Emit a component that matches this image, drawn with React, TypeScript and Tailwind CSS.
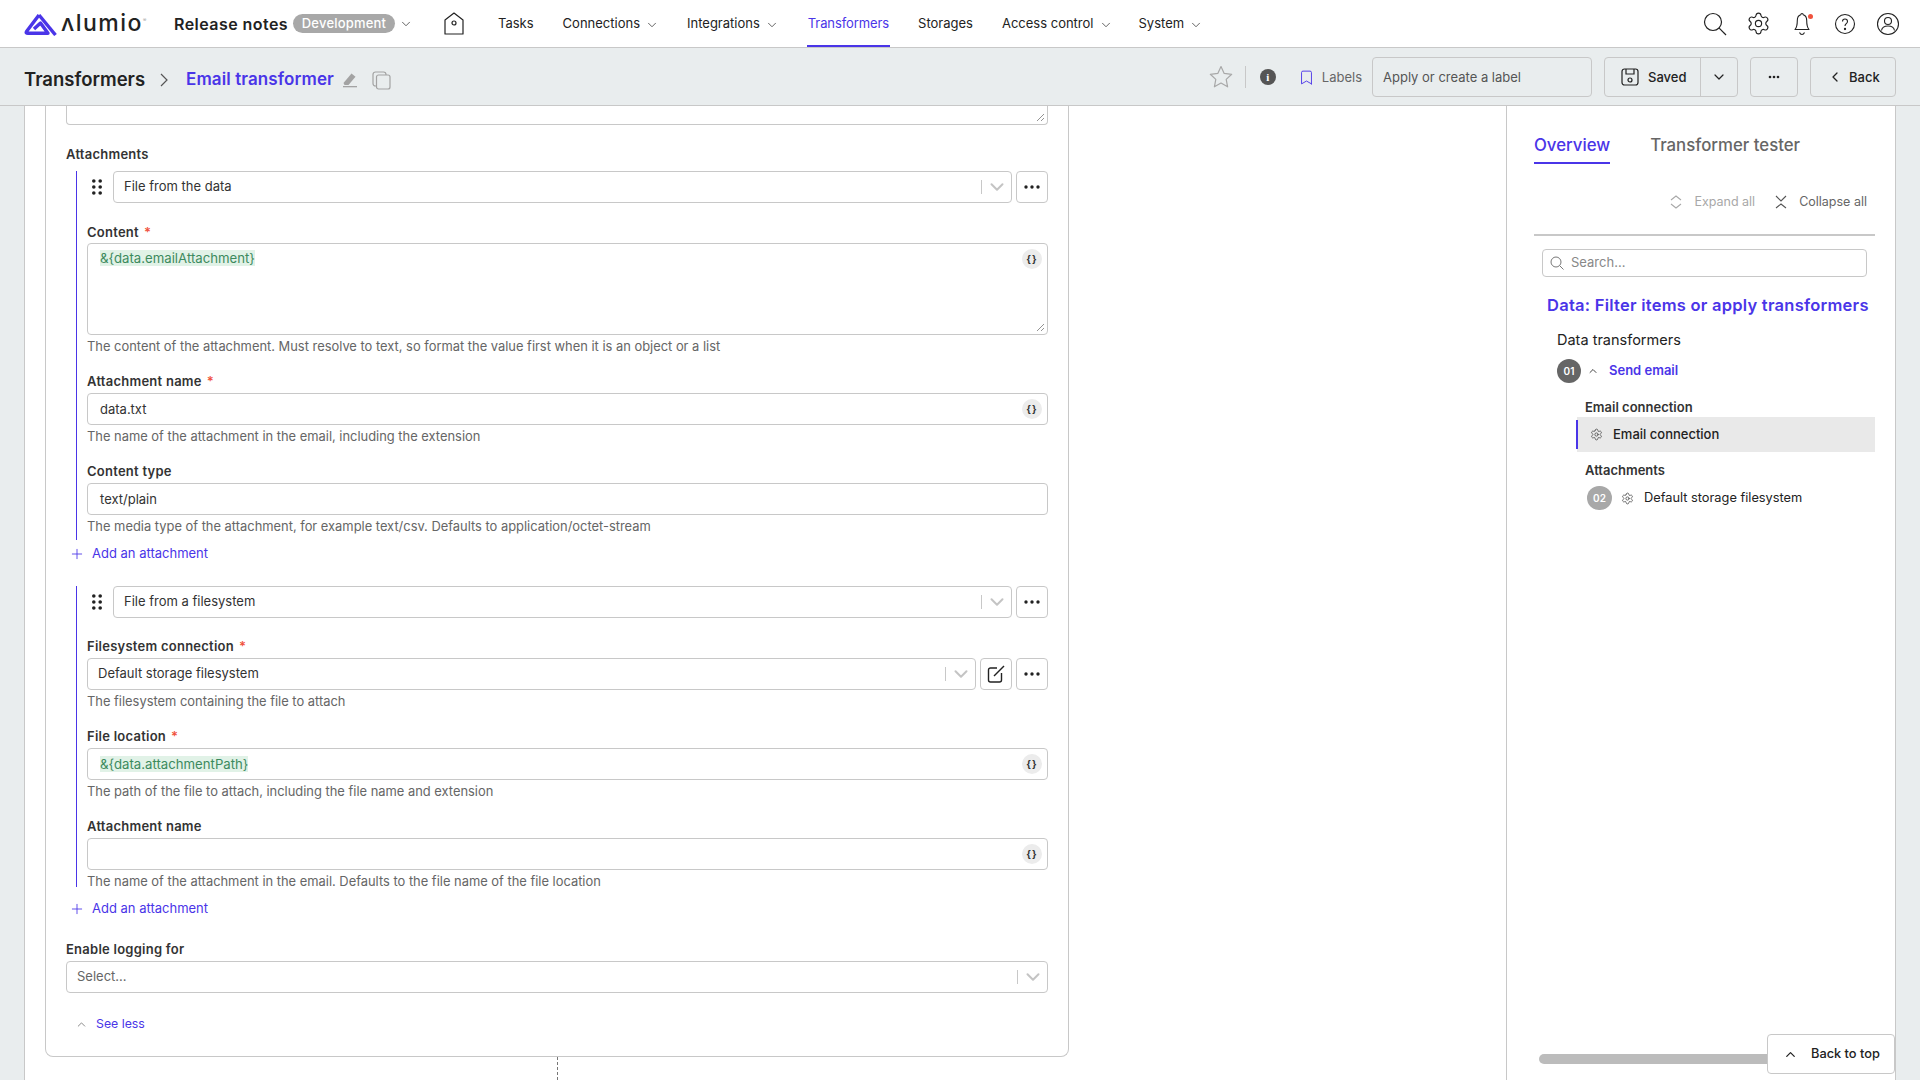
import { Bookmark, ChevronDown, ChevronLeft, ChevronUp, Plus, Settings } from "lucide-react";

const font = "font-['Inter','Liberation_Sans',sans-serif]";

function Dots() {
  return (
    <svg width="16" height="4" viewBox="0 0 16 4" className="text-[#222]">
      <circle cx="2" cy="2" r="1.7" fill="currentColor" />
      <circle cx="8" cy="2" r="1.7" fill="currentColor" />
      <circle cx="14" cy="2" r="1.7" fill="currentColor" />
    </svg>
  );
}

function MoreButton() {
  return (
    <button className="w-8 h-8 shrink-0 flex items-center justify-center bg-white border border-[#c8c8c8] rounded">
      <Dots />
    </button>
  );
}

function Braces() {
  return (
    <span className="absolute right-[5px] top-[5px] w-5 h-5 rounded-full bg-[#ececec] flex items-center justify-center text-[10px] font-bold text-[#333] tracking-[1px]">
      {"{}"}
    </span>
  );
}

function Resizer() {
  return (
    <svg width="9" height="9" viewBox="0 0 9 9" className="absolute right-[2px] bottom-[2px] text-[#777]">
      <path d="M1 8 8 1M5 8 8 5" stroke="currentColor" strokeWidth="0.8" />
    </svg>
  );
}

function Select({ value, muted = false }: { value: string; muted?: boolean }) {
  return (
    <div className="flex-1 h-8 bg-white border border-[#c8c8c8] rounded flex items-center pl-[10px] pr-[3px]">
      <span className={`flex-1 text-[13px] ${muted ? "text-[#666]" : "text-[#333]"}`}>{value}</span>
      <span className="w-px h-[14px] bg-[#c8c8c8] mr-[4px]" />
      <ChevronDown size={22} strokeWidth={2.2} className="text-[#c4c4c4]" />
    </div>
  );
}

function Token({ children }: { children: string }) {
  return <span className="bg-[#e1f2e7] text-[#3c8a5e] text-[13.2px] leading-[16px] inline-block">{children}</span>;
}

function Input({ value, token, braces = true }: { value?: string; token?: string; braces?: boolean }) {
  return (
    <div className="relative h-8 bg-white border border-[#c8c8c8] rounded flex items-center pl-3 text-[13px] leading-[22px] text-[#333]">
      {token ? <Token>{token}</Token> : <span>{value}</span>}
      {braces && <Braces />}
    </div>
  );
}

function Label({ children, required, className = "" }: { children: string; required?: boolean; className?: string }) {
  return (
    <div className={`h-5 leading-5 text-[13px] tracking-[0.25px] font-semibold text-[#333] ${className}`}>
      {children}
      {required && <span className="text-[#f0523d] ml-[5px]">*</span>}
    </div>
  );
}

function Help({ children, className = "" }: { children: string; className?: string }) {
  return <div className={`h-5 leading-[22px] text-[12.9px] text-[#666] ${className}`}>{children}</div>;
}

function AddAttachment({ className = "" }: { className?: string }) {
  return (
    <div className={`h-5 flex items-center text-[13px] text-[#4a35e8] pl-[3px] gap-[7px] ${className}`}>
      <Plus size={16} strokeWidth={1.3} />
      Add an attachment
    </div>
  );
}

function DragHandle() {
  return (
    <svg width="10" height="16" viewBox="0 0 10 16" className="text-[#222] ml-[15px] mr-[7px]">
      {[2, 8, 14].map((y) => (
        <g key={y}>
          <circle cx="1.8" cy={y} r="1.8" fill="currentColor" />
          <circle cx="8.2" cy={y} r="1.8" fill="currentColor" />
        </g>
      ))}
    </svg>
  );
}

function Logo() {
  return (
    <div className="flex items-center w-[120px] shrink-0">
      <svg width="34" height="24" viewBox="0 0 34 24" fill="none" stroke="#4a35e8" strokeWidth="3.4" strokeLinejoin="round" className="shrink-0">
        <path d="M15 3 2.500 19.500q-1 1.800 1.500 1.800H24L16.500 11 10 17" />
        <path d="m15 3 16.500 20" />
      </svg>
      <span className="ml-[3px] text-[23px] leading-none font-medium text-[#222] tracking-[1.5px]">ʌlumio</span>
      <span className="text-[5px] text-[#999] -mt-[6px]">®</span>
    </div>
  );
}

function NavItem({ label, caret, className = "" }: { label: string; caret?: boolean; className?: string }) {
  return (
    <div className={`h-full flex items-center text-[13px] text-[#222] ${className}`}>
      {label}
      {caret && <ChevronDown size={14} strokeWidth={1.3} className="ml-[5px] mt-[2px] text-[#333]" />}
    </div>
  );
}

function HomeIcon() {
  return (
    <svg width="20" height="23" viewBox="0 0 20 23" fill="none" stroke="#222" strokeWidth="1.2">
      <path d="M1 8 10 1l9 7v14H1z" strokeLinejoin="round" />
      <circle cx="10" cy="11" r="2" />
    </svg>
  );
}

function SearchIcon() {
  return (
    <svg width="24" height="24" viewBox="0 0 24 24" fill="none" stroke="#222" strokeWidth="1.2">
      <circle cx="10" cy="10" r="8.500" />
      <path d="m16.200 16.200 6.800 6.800" />
    </svg>
  );
}

function BellIcon() {
  return (
    <span className="relative w-6 h-6 flex items-center justify-center">
      <svg width="16" height="24" viewBox="0 0 16 24" fill="none" stroke="#222" strokeWidth="1.1">
        <path d="M8 1.500c-.8 0-1.200.5-1.200 1.300C4.300 3.500 3.300 5.500 3.300 8.500c0 4-.6 7-2.300 9h14c-1.700-2-2.300-5-2.300-9 0-3-1-5-3.500-5.700 0-.8-.4-1.300-1.200-1.300z" strokeLinejoin="round" />
        <path d="M5.500 20.500c.6 1.300 1.400 2 2.500 2s1.900-.7 2.500-2" />
      </svg>
      <span className="absolute right-[1px] top-[2px] w-[5px] h-[5px] rounded-full bg-[#f0523d]" />
    </span>
  );
}

function HelpIcon() {
  return (
    <svg width="24" height="24" viewBox="0 0 24 24" fill="none" stroke="#222" strokeWidth="1.1">
      <circle cx="12" cy="12" r="9.500" />
      <path d="M9.500 9.500c0-1.500 1.100-2.500 2.500-2.500s2.500 1 2.500 2.400c0 2.300-2.500 2.300-2.500 4.600" />
      <circle cx="12" cy="17" r=".6" fill="#222" />
    </svg>
  );
}

function UserIcon() {
  return (
    <svg width="24" height="24" viewBox="0 0 24 24" fill="none" stroke="#222" strokeWidth="1.1">
      <circle cx="12" cy="12" r="10.500" />
      <circle cx="12" cy="9" r="3.500" />
      <path d="M5.500 18.500c.5-3 3-4.500 6.500-4.500s6 1.500 6.500 4.500" />
    </svg>
  );
}

function Header() {
  return (
    <header className="h-12 bg-white border-b border-[#c8c8c8] flex items-center pl-6 shrink-0">
      <Logo />
      <div className="ml-[30px] w-[114px] text-[16px] tracking-[0.45px] font-semibold text-[#222] whitespace-nowrap">Release notes</div>
      <span className="ml-[5px] w-[102px] h-[19px] rounded-full bg-[#a8a8a8] text-white text-[13px] tracking-[0.2px] font-medium flex items-center justify-center">
        Development
      </span>
      <ChevronDown size={14} strokeWidth={1.3} className="ml-[4px] text-[#333]" />
      <span className="ml-[31px] flex"><HomeIcon /></span>
      <NavItem label="Tasks" className="ml-[34px]" />
      <NavItem label="Connections" caret className="ml-[29px]" />
      <NavItem label="Integrations" caret className="ml-[28px]" />
      <div className="ml-[28px] h-full flex items-center text-[13px] tracking-[-0.1px] text-[#4a35e8] border-b-2 border-[#4a35e8] pt-[2px] px-[1px]">Transformers</div>
      <NavItem label="Storages" className="ml-[28px]" />
      <NavItem label="Access control" caret className="ml-[29px]" />
      <NavItem label="System" caret className="ml-[26px]" />
      <div className="ml-auto mr-[20px] flex items-center gap-[19px]">
        <SearchIcon />
        <Settings size={25} strokeWidth={1.1} className="text-[#222]" />
        <BellIcon />
        <HelpIcon />
        <UserIcon />
      </div>
    </header>
  );
}

function PenIcon() {
  return (
    <svg width="16" height="16" viewBox="0 0 16 16" fill="#a3a3a3">
      <path d="M1.500 11 9.500 1.500l4 3.300-7 8.200H2.500z" />
      <rect x="1" y="14" width="14" height="1.300" />
    </svg>
  );
}

function CopyIcon() {
  return (
    <svg width="19" height="19" viewBox="0 0 19 19" fill="none" stroke="#a3a3a3" strokeWidth="1.200">
      <rect x="1" y="1" width="13" height="14" rx="2.500" />
      <rect x="4.500" y="4" width="13.500" height="14" rx="2" fill="#e9edee" />
    </svg>
  );
}

function SaveIcon() {
  return (
    <svg width="18" height="18" viewBox="0 0 18 18" fill="none" stroke="#222" strokeWidth="1.200">
      <rect x="1" y="1" width="16" height="16" rx="2.500" />
      <path d="M5 1v5h8V1" />
      <circle cx="9" cy="12" r="2" />
    </svg>
  );
}

function EditIcon() {
  return (
    <svg width="18" height="18" viewBox="0 0 18 18" fill="none" stroke="#222" strokeWidth="1.400">
      <path d="M10 3H3.500a2 2 0 0 0-2 2v10a2 2 0 0 0 2 2h9a2 2 0 0 0 2-2V8" />
      <path d="M7 11 17 1" />
    </svg>
  );
}

function Toolbar() {
  return (
    <div className="h-[58px] bg-[#e9edee] border-b border-[#c8c8c8] flex items-center pl-6 pr-6 shrink-0">
      <div className="flex items-center mt-[7px]">
        <div className="w-[122px] text-[18.500px] font-semibold text-[#222]">Transformers</div>
        <svg width="10" height="14" viewBox="0 0 10 14" fill="none" stroke="#555" strokeWidth="1.200" className="ml-[13px]">
          <path d="m2 1 6 6-6 6" />
        </svg>
        <div className="ml-[17px] w-[150px] text-[17px] tracking-[0.1px] font-semibold text-[#4a35e8] whitespace-nowrap">Email transformer</div>
        <span className="ml-[6px] flex"><PenIcon /></span>
        <span className="ml-[14px] flex"><CopyIcon /></span>
      </div>

      <div className="ml-auto flex items-center mt-px">
        <svg width="24" height="24" viewBox="0 0 24 24" fill="none" stroke="#a8a8a8" strokeWidth="1.200" strokeLinejoin="round" className="mr-[12px]">
          <path d="m12 1.500 3.200 6.900 7.500.9-5.500 5.100 1.400 7.400-6.600-3.700-6.600 3.700 1.400-7.400L1.300 9.300l7.500-.9z" />
        </svg>
        <span className="w-px h-[22px] bg-[#c8c8c8]" />
        <span className="ml-[14px] w-4 h-4 rounded-full bg-[#555] text-white text-[11px] font-bold font-['Liberation_Serif',serif] flex items-center justify-center">i</span>
        <Bookmark size={17} strokeWidth={1.3} className="ml-[22px] text-[#4a35e8]" />
        <span className="ml-[7px] pt-[2px] text-[13px] text-[#666]">Labels</span>
        <div className="ml-[10px] w-[220px] h-10 border border-[#c8c8c8] rounded flex items-center pl-[10px] pt-[2px] text-[13px] text-[#555]">
          Apply or create a label
        </div>
        <div className="ml-3 w-[134px] h-10 border border-[#c8c8c8] rounded flex items-center text-[13px] text-[#222]">
          <div className="flex-1 flex items-center pl-4 gap-[9px] font-medium">
            <SaveIcon />
            <span className="pt-[2px]">Saved</span>
          </div>
          <div className="w-[37px] h-full border-l border-[#c8c8c8] flex items-center justify-center">
            <ChevronDown size={16} strokeWidth={1.8} />
          </div>
        </div>
        <div className="ml-3 w-[48px] h-10 border border-[#c8c8c8] rounded flex items-center justify-center">
          <svg width="12" height="4" viewBox="0 0 12 4" fill="#222">
            <circle cx="2" cy="2" r="1.300" />
            <circle cx="6" cy="2" r="1.300" />
            <circle cx="10" cy="2" r="1.300" />
          </svg>
        </div>
        <div className="ml-3 w-[86px] h-10 border border-[#c8c8c8] rounded flex items-center text-[13px] text-[#222] font-medium pl-4 gap-[6px]">
          <ChevronLeft size={16} strokeWidth={1.9} />
          <span className="pt-[2px]">Back</span>
        </div>
      </div>
    </div>
  );
}

function FormPanel() {
  return (
    <div className="w-[1044px] shrink-0">
      <div className="ml-5 bg-white border border-t-0 border-[#c8c8c8] rounded-b-lg pl-5 pr-5 pb-[22px]">
        <div className="relative h-[19px] border border-t-0 border-[#c8c8c8] rounded-b"><Resizer /></div>

        <Label className="mt-[19px]">Attachments</Label>

        <div className="mt-[7px] ml-[10px] border-l border-[#4a35e8] pl-[10px] pb-1">
          <div className="flex items-center gap-1 -ml-[10px]">
            <DragHandle />
            <Select value="File from the data" />
            <MoreButton />
          </div>
          <Label required className="mt-[19px]">Content</Label>
          <div className="relative mt-px h-[92px] border border-[#c8c8c8] rounded pl-3 pt-px">
            <Token>{"&{data.emailAttachment}"}</Token>
            <Braces />
            <Resizer />
          </div>
          <Help className="mt-px">The content of the attachment. Must resolve to text, so format the value first when it is an object or a list</Help>
          <Label required className="mt-[15px]">Attachment name</Label>
          <div className="mt-[2px]"><Input value="data.txt" /></div>
          <Help className="mt-px">The name of the attachment in the email, including the extension</Help>
          <Label className="mt-[15px]">Content type</Label>
          <div className="mt-[2px]"><Input value="text/plain" braces={false} /></div>
          <Help className="mt-px">The media type of the attachment, for example text/csv. Defaults to application/octet-stream</Help>
        </div>
        <AddAttachment className="mt-1" />

        <div className="mt-[22px] ml-[10px] border-l border-[#4a35e8] pl-[10px] h-[301px]">
          <div className="flex items-center gap-1 -ml-[10px]">
            <DragHandle />
            <Select value="File from a filesystem" />
            <MoreButton />
          </div>
          <Label required className="mt-[18px]">Filesystem connection</Label>
          <div className="mt-[2px] flex gap-1">
            <Select value="Default storage filesystem" />
            <button className="w-8 h-8 shrink-0 flex items-center justify-center bg-white border border-[#c8c8c8] rounded">
              <EditIcon />
            </button>
            <MoreButton />
          </div>
          <Help className="mt-px">The filesystem containing the file to attach</Help>
          <Label required className="mt-[15px]">File location</Label>
          <div className="mt-[2px]"><Input token="&{data.attachmentPath}" /></div>
          <Help className="mt-px">The path of the file to attach, including the file name and extension</Help>
          <Label className="mt-[15px]">Attachment name</Label>
          <div className="mt-[2px]"><Input /></div>
          <Help className="mt-px">The name of the attachment in the email. Defaults to the file name of the file location</Help>
        </div>
        <AddAttachment className="mt-[12px]" />

        <Label className="mt-5">Enable logging for</Label>
        <div className="mt-[2px] flex"><Select value="Select..." muted /></div>

        <div className="mt-[21px] h-5 flex items-center text-[12.300px] text-[#4a35e8] pl-[9px] gap-[8px]">
          <ChevronUp size={13} strokeWidth={1.4} className="text-[#666]" />
          See less
        </div>
      </div>
      <div className="ml-[532px] h-[23px] border-l border-dashed border-[#777]" />
    </div>
  );
}

function ExpandIcon() {
  return (
    <svg width="12" height="14" viewBox="0 0 12 14" fill="none" stroke="#a8a8a8" strokeWidth="1.100">
      <path d="M1 5 6 1l5 4M1 9l5 4 5-4" />
    </svg>
  );
}

function CollapseIcon() {
  return (
    <svg width="12" height="14" viewBox="0 0 12 14" fill="none" stroke="#555" strokeWidth="1.100">
      <path d="m1 1 5 5 5-5M1 13l5-4 5 4" />
    </svg>
  );
}

function SearchSmall() {
  return (
    <svg width="14" height="14" viewBox="0 0 14 14" fill="none" stroke="#777" strokeWidth="1">
      <circle cx="6" cy="6" r="5" />
      <path d="m9.700 9.700 3.800 3.800" />
    </svg>
  );
}

function SidePanel() {
  return (
    <aside className="relative flex-1 border-l border-[#c8c8c8] pl-[27px] pr-[20px] flex flex-col">
      <div className="flex mt-[28px] text-[16.800px]">
        <div className="h-[30px] leading-[22px] text-[#4a35e8] border-b-2 border-[#4a35e8] font-medium">Overview</div>
        <div className="ml-[40px] leading-[22px] text-[#666] font-medium">Transformer tester</div>
      </div>
      <div className="flex items-center justify-end mt-[28px] pr-[8px] h-5 text-[12.500px]">
        <ExpandIcon />
        <span className="ml-[12px] text-[#a8a8a8]">Expand all</span>
        <span className="ml-[20px] flex"><CollapseIcon /></span>
        <span className="ml-[12px] text-[#666]">Collapse all</span>
      </div>
      <div className="mt-[22px] h-[2px] bg-[#c8c8c8]" />
      <div className="mt-[13px] mx-2 h-[28px] border border-[#c8c8c8] rounded flex items-center pl-[7px] gap-[7px] text-[13px] text-[#888]">
        <SearchSmall />
        Search...
      </div>
      <div className="mt-[16px] ml-[13px] h-[24px] leading-[24px] text-[16.500px] tracking-[0.25px] font-semibold text-[#4a35e8] whitespace-nowrap">
        Data: Filter items or apply transformers
      </div>
      <div className="mt-[13px] ml-[23px] h-[20px] leading-[20px] text-[14.500px] text-[#222]">Data transformers</div>
      <div className="mt-[9px] ml-[23px] flex items-center h-[24px]">
        <span className="w-6 h-6 rounded-full bg-[#666] text-white text-[10px] font-semibold flex items-center justify-center">01</span>
        <ChevronUp size={12} strokeWidth={2} className="ml-[6px] text-[#444]" />
        <span className="ml-[10px] text-[13px] font-semibold text-[#4a35e8]">Send email</span>
      </div>
      <div className="mt-[14px] ml-[51px] h-[20px] leading-[20px] text-[13px] font-semibold text-[#333]">Email connection</div>
      <div className="ml-[43px] h-[35px] bg-[#e9e9e9] relative flex items-center pl-[13px] text-[13px] font-medium text-[#222]">
        <span className="absolute -left-px top-[3px] bottom-[3px] w-[2px] bg-[#4a35e8]" />
        <Settings size={13} strokeWidth={1.4} className="text-[#444]" />
        <span className="ml-[10px]">Email connection</span>
      </div>
      <div className="mt-[8px] ml-[51px] h-[20px] leading-[20px] text-[13px] font-semibold text-[#333]">Attachments</div>
      <div className="mt-[6px] ml-[53px] flex items-center h-[24px] text-[12.800px] text-[#222]">
        <span className="w-[25px] h-[24px] rounded-full bg-[#a8a8a8] text-white text-[10px] font-semibold flex items-center justify-center">02</span>
        <Settings size={13} strokeWidth={1.4} className="ml-[9px] text-[#444]" />
        <span className="ml-[10px]">Default storage filesystem</span>
      </div>
      <div className="mt-auto mb-[16px] ml-[5px] -mr-[20px] h-[10px] bg-[#bcbcbc] rounded-l-full" />
      <div className="absolute right-0 top-[928px] w-[128px] h-[40px] bg-white border border-[#c8c8c8] rounded flex items-center pl-[15px] gap-[13px] text-[12.800px] font-medium text-[#222]">
        <ChevronUp size={15} strokeWidth={2} />
        Back to top
      </div>
    </aside>
  );
}

export default function App() {
  return (
    <div className={`${font} w-[1920px] h-[1080px] overflow-hidden flex flex-col bg-[#e9edee]`}>
      <Header />
      <Toolbar />
      <main className="flex-1 min-h-0 flex pl-6 pr-6">
        <div className="flex-1 flex bg-white border-l border-r border-[#c8c8c8]">
          <FormPanel />
          <div className="w-[437px] shrink-0" />
          <SidePanel />
        </div>
      </main>
    </div>
  );
}
